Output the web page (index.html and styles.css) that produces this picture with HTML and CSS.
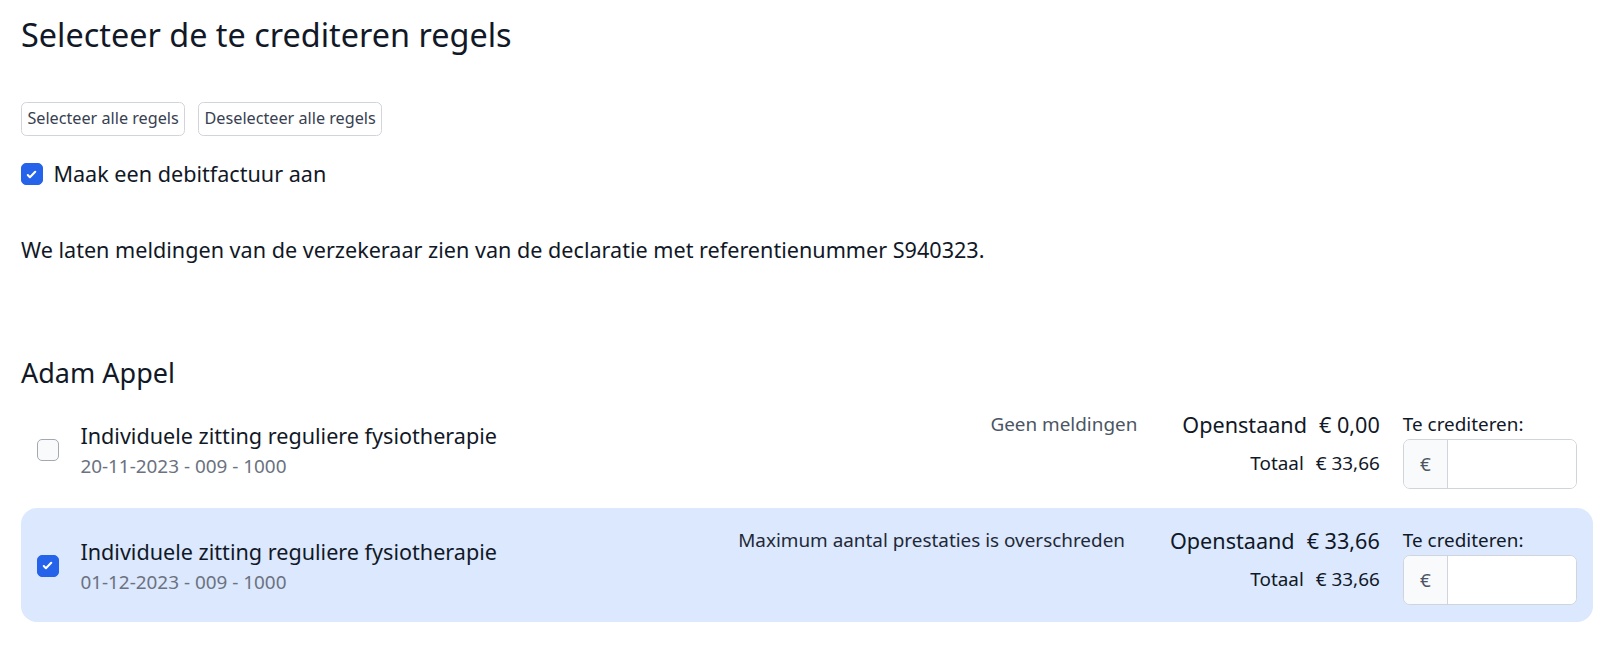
FILE: index.html
```html
<!DOCTYPE html>
<html lang="nl">
<head>
<meta charset="utf-8">
<title>Selecteer de te crediteren regels</title>
<link rel="stylesheet" href="styles.css">
</head>
<body>
<main class="page">
  <h1 class="title">Selecteer de te crediteren regels</h1>

  <div class="actions">
    <button class="btn" type="button">Selecteer alle regels</button>
    <button class="btn" type="button">Deselecteer alle regels</button>
  </div>

  <label class="check-line">
    <span class="cbox cbox--checked">
      <svg viewBox="0 0 16 16" width="16" height="16"><path fill="#fff" d="M12.207 4.793a1 1 0 010 1.414l-5 5a1 1 0 01-1.414 0l-2-2a1 1 0 011.414-1.414L6.5 9.086l4.293-4.293a1 1 0 011.414 0z"/></svg>
    </span>
    <span>Maak een debitfactuur aan</span>
  </label>

  <p class="intro">We laten meldingen van de verzekeraar zien van de declaratie met referentienummer S940323.</p>

  <h2 class="patient">Adam Appel</h2>

  <div class="rows">
    <div class="row">
      <div class="row-main">
        <span class="cbox"></span>
        <div class="row-text">
          <div class="row-title">Individuele zitting reguliere fysiotherapie</div>
          <div class="row-meta">20-11-2023 - 009 - 1000</div>
        </div>
      </div>
      <div class="row-msg row-msg--muted">Geen meldingen</div>
      <div class="amounts">
        <div class="amount-open"><span>Openstaand</span><span>€&nbsp;0,00</span></div>
        <div class="amount-total"><span>Totaal</span><span>€&nbsp;33,66</span></div>
      </div>
      <div class="credit">
        <div class="credit-label">Te crediteren:</div>
        <div class="input-group">
          <span class="addon">€</span>
          <span class="input"></span>
        </div>
      </div>
    </div>

    <div class="row row--selected">
      <div class="row-main">
        <span class="cbox cbox--checked">
          <svg viewBox="0 0 16 16" width="16" height="16"><path fill="#fff" d="M12.207 4.793a1 1 0 010 1.414l-5 5a1 1 0 01-1.414 0l-2-2a1 1 0 011.414-1.414L6.5 9.086l4.293-4.293a1 1 0 011.414 0z"/></svg>
        </span>
        <div class="row-text">
          <div class="row-title">Individuele zitting reguliere fysiotherapie</div>
          <div class="row-meta">01-12-2023 - 009 - 1000</div>
        </div>
      </div>
      <div class="row-msg">Maximum aantal prestaties is overschreden</div>
      <div class="amounts">
        <div class="amount-open"><span>Openstaand</span><span>€&nbsp;33,66</span></div>
        <div class="amount-total"><span>Totaal</span><span>€&nbsp;33,66</span></div>
      </div>
      <div class="credit">
        <div class="credit-label">Te crediteren:</div>
        <div class="input-group">
          <span class="addon">€</span>
          <span class="input"></span>
        </div>
      </div>
    </div>
  </div>
</main>
</body>
</html>
```

FILE: styles.css
```css
* { box-sizing: border-box; }

html, body {
  margin: 0;
  padding: 0;
  background: #ffffff;
}

body {
  font-family: "Noto Sans", "Open Sans", "Liberation Sans", sans-serif;
  color: #111827;
  font-size: 21.6px;
  line-height: 32.4px;
}

.page {
  padding: 13px 7px 0 21px;
}

.title {
  margin: 0;
  font-size: 32.4px;
  line-height: 43.2px;
  font-weight: 400;
  color: #111827;
}

.actions {
  display: flex;
  gap: 13px;
  margin-top: 46px;
}

.btn {
  font-family: inherit;
  font-size: 16.2px;
  line-height: 21.6px;
  height: 34px;
  padding: 0 5.4px;
  color: #374151;
  background: #ffffff;
  border: 1px solid #d1d5db;
  border-radius: 5.4px;
}

.check-line {
  display: flex;
  align-items: center;
  gap: 10.8px;
  margin-top: 21.6px;
  font-size: 21.6px;
  line-height: 32.4px;
}

.cbox {
  flex: 0 0 auto;
  width: 21.6px;
  height: 21.6px;
  border-radius: 5px;
  border: 1px solid #a3a8b1;
  background: #f9fafb;
  display: flex;
  align-items: center;
  justify-content: center;
}

.cbox--checked {
  background: #2563eb;
  border-color: #2563eb;
}

.cbox svg {
  width: 17px;
  height: 17px;
}

.intro {
  margin: 43.6px 0 0;
  font-size: 21.6px;
  line-height: 32.4px;
}

.patient {
  margin: 87.8px 0 0;
  font-size: 27px;
  line-height: 37.8px;
  font-weight: 400;
  color: #111827;
}

.rows {
  display: flex;
  flex-direction: column;
  gap: 2px;
}

.row {
  display: flex;
  align-items: flex-start;
  padding: 19px 16.2px 17px 16.2px;
  border-radius: 16px;
}

.row--selected {
  background: #dbe8fd;
}

.row-main {
  flex: 1 1 auto;
  align-self: center;
  display: flex;
  align-items: center;
  gap: 21.6px;
}

.row-title {
  font-size: 21.6px;
  line-height: 32.4px;
  color: #111827;
}

.row-meta {
  font-size: 18.9px;
  line-height: 27px;
  color: #6b7280;
}

.row-msg {
  font-size: 18.9px;
  line-height: 27px;
  color: #1f2937;
  text-align: right;
  margin-right: 45px;
}

.row-msg--muted {
  color: #4b5563;
}

.amounts {
  margin-right: 23px;
  display: flex;
  flex-direction: column;
  align-items: flex-end;
}

.amount-open {
  display: flex;
  gap: 12px;
  font-size: 21.6px;
  line-height: 27px;
  color: #111827;
}

.amount-total {
  display: flex;
  gap: 12px;
  align-items: center;
  height: 50px;
  margin-top: 1px;
  font-size: 18.9px;
  line-height: 27px;
  color: #111827;
}

.credit {
  width: 174px;
}

.credit-label {
  font-size: 18.9px;
  line-height: 27px;
  color: #111827;
}

.input-group {
  display: flex;
  height: 50px;
  margin-top: 1px;
  border: 1px solid #d1d5db;
  border-radius: 7px;
  background: #ffffff;
  overflow: hidden;
}

.addon {
  width: 44px;
  display: flex;
  align-items: center;
  justify-content: center;
  background: #f9fafb;
  border-right: 1px solid #d1d5db;
  font-size: 18.9px;
  color: #4b5563;
}

.input {
  flex: 1;
  background: #ffffff;
}
```
